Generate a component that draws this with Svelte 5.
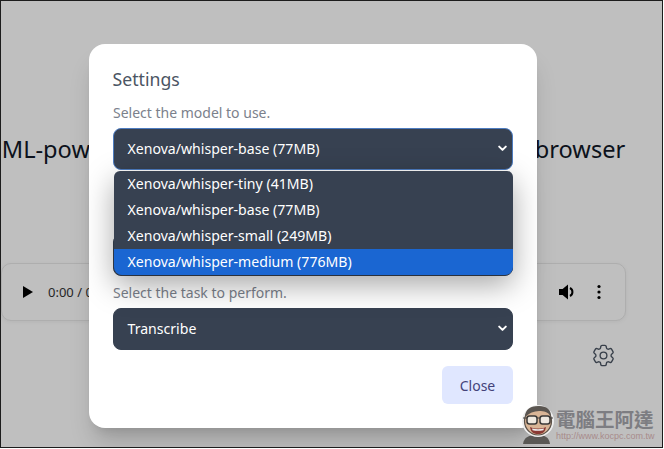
<script>
  const models = [
    { label: 'Xenova/whisper-tiny (41MB)' },
    { label: 'Xenova/whisper-base (77MB)' },
    { label: 'Xenova/whisper-small (249MB)' },
    { label: 'Xenova/whisper-medium (776MB)', active: true }
  ];
</script>

{#snippet chevron()}
  <svg class="chev" width="9" height="7" viewBox="0 0 9 7" aria-hidden="true">
    <path d="M1.2 1.6 4.500 4.900 7.800 1.600" fill="none" stroke="#fff" stroke-width="2" stroke-linecap="round" stroke-linejoin="round" />
  </svg>
{/snippet}

<div class="frame">
  <main class="page">
    <h1>ML-powered speech recognition directly in your browser</h1>
    <div class="player">
      <svg class="play" width="12" height="14" viewBox="0 0 12 14"><path d="M1 1v12l10-6z" fill="#000" /></svg>
      <span class="time">0:00 / 0:00</span>
      <span class="grow"></span>
      <svg class="vol" width="18" height="18" viewBox="0 0 18 18">
        <path d="M1 6v6h3.600L10 16.500V1.500L4.600 6z" fill="#000" />
        <path d="M12 5a4.500 4.500 0 0 1 0 8" fill="none" stroke="#000" stroke-width="2" />
      </svg>
      <svg class="dots" width="4" height="16" viewBox="0 0 4 16"><circle cx="2" cy="2.500" r="1.600" /><circle cx="2" cy="8" r="1.600" /><circle cx="2" cy="13.500" r="1.600" /></svg>
    </div>
    <div class="gear-row">
      <svg width="27" height="27" viewBox="0 0 24 24" fill="none" stroke="#4b5563" stroke-width="1.200" stroke-linecap="round" stroke-linejoin="round">
        <path d="M9.594 3.940c.09-.542.560-.940 1.110-.940h2.593c.550 0 1.020.398 1.110.940l.213 1.281c.063.374.313.686.645.870.074.040.147.083.220.127.324.196.720.257 1.075.124l1.217-.456a1.125 1.125 0 0 1 1.370.490l1.296 2.247a1.125 1.125 0 0 1-.260 1.431l-1.003.827c-.293.240-.438.613-.431.992a6.759 6.759 0 0 1 0 .255c-.007.378.138.750.430.990l1.005.828c.424.350.534.954.260 1.430l-1.298 2.247a1.125 1.125 0 0 1-1.369.491l-1.217-.456c-.355-.133-.750-.072-1.076.124a6.570 6.570 0 0 1-.220.128c-.331.183-.581.495-.644.869l-.213 1.280c-.090.543-.560.941-1.110.941h-2.594c-.550 0-1.020-.398-1.110-.940l-.213-1.281c-.062-.374-.312-.686-.644-.870a6.520 6.520 0 0 1-.220-.127c-.325-.196-.720-.257-1.076-.124l-1.217.456a1.125 1.125 0 0 1-1.369-.490l-1.297-2.247a1.125 1.125 0 0 1 .260-1.431l1.004-.827c.292-.240.437-.613.430-.992a6.932 6.932 0 0 1 0-.255c.007-.378-.138-.750-.430-.990l-1.004-.828a1.125 1.125 0 0 1-.260-1.430l1.297-2.247a1.125 1.125 0 0 1 1.370-.491l1.216.456c.356.133.751.072 1.076-.124.072-.044.146-.087.220-.128.332-.183.582-.495.644-.869l.214-1.281Z" />
        <path d="M15 12a3 3 0 1 1-6 0 3 3 0 0 1 6 0Z" />
      </svg>
    </div>
  </main>

  <div class="overlay">
    <section class="modal">
      <h2>Settings</h2>

      <p class="label first">Select the model to use.</p>
      <div class="select-wrap">
        <div class="select focused"><span>Xenova/whisper-base (77MB)</span>{@render chevron()}</div>
        <ul class="menu">
          {#each models as m}
            <li class:active={m.active}>{m.label}</li>
          {/each}
        </ul>
      </div>

      <div class="select covered"></div>

      <p class="label task">Select the task to perform.</p>
      <div class="select"><span>Transcribe</span>{@render chevron()}</div>

      <div class="actions"><button type="button">Close</button></div>
    </section>
  </div>

  <div class="mark">
    <svg width="36" height="40" viewBox="0 0 36 40">
      <path d="M3 40c1-7 6-9 14-9s12 2 13 9z" fill="#5a5855" />
      <ellipse cx="18" cy="17" rx="15" ry="15" fill="none" stroke="#eee" stroke-width="2" />
      <ellipse cx="18" cy="17" rx="13.500" ry="14" fill="#d9b596" stroke="#5b5148" stroke-width="1.200" />
      <path d="M5 13C5 5 11 2 19 2s12 4 12 10c-3-4-7-5-12-5S9 9 5 13z" fill="#5a5550" />
      <path d="M3 14h30" stroke="#444" stroke-width="1" />
      <rect x="7" y="12" width="10" height="8" rx="2.500" fill="#efe9e0" stroke="#3c3a38" stroke-width="1.500" />
      <rect x="20" y="12" width="10" height="8" rx="2.500" fill="#efe9e0" stroke="#3c3a38" stroke-width="1.500" />
      <path d="M10 23c5 2 11 2 16 0-1 6-4 7-8 7s-7-1-8-7z" fill="#8a3a34" />
      <path d="M12 24.500c4 1 8 1 12 0l-.6 1.800c-3.500.7-7.500.7-10.800 0z" fill="#eee" />
    </svg>
    <div class="mark-text">
      <span class="cjk">電腦王阿達</span>
      <span class="url">http://www.kocpc.com.tw</span>
    </div>
  </div>
</div>

<style>
  :global(body) {
    margin: 0;
    background: #fff;
  }
  .frame {
    position: relative;
    box-sizing: border-box;
    width: 663px;
    height: 448px;
    border: 1px solid #1c1c1c;
    overflow: hidden;
    background: #fff;
    font-family: "Noto Sans", "Open Sans", sans-serif;
    color: #111827;
  }
  .page {
    width: 625px;
    padding-top: 130px;
  }
  h1 {
    margin: 0;
    font-size: 23.600px;
    line-height: 36px;
    font-weight: 400;
    text-align: center;
    white-space: nowrap;
  }
  .player {
    box-sizing: border-box;
    display: flex;
    align-items: center;
    height: 58px;
    margin-top: 96px;
    padding: 0 24px 0 20px;
    border: 1px solid #e8e8e8;
    border-radius: 10px;
    background: #fff;
    box-shadow: 0 1px 4px rgba(0, 0, 0, .06);
  }
  .time {
    margin-left: 14px;
    font-size: 13px;
    color: #333;
  }
  .grow { flex: 1; }
  .vol { margin-right: 21px; }
  .gear-row {
    display: flex;
    justify-content: flex-end;
    padding: 21px 9px 0 0;
  }
  .overlay {
    position: absolute;
    inset: 0;
    background: rgba(0, 0, 0, .25);
  }
  .modal {
    position: absolute;
    left: 88px;
    top: 43px;
    box-sizing: border-box;
    width: 448px;
    height: 384px;
    padding: 24px;
    border-radius: 16px;
    background: #fff;
    box-shadow: 0 18px 24px -5px rgba(0, 0, 0, .18), 0 8px 10px -6px rgba(0, 0, 0, .1);
  }
  h2 {
    margin: 0 0 0 -.5px;
    font-size: 17.700px;
    line-height: 22px;
    font-weight: 400;
    color: #4b5563;
  }
  .label {
    margin: 0 0 5px;
    font-size: 14px;
    line-height: 20px;
    color: #7b818c;
  }
  .first { margin-top: 13px; }
  .covered { margin-top: 64px; }
  .task { margin-top: 7px; }
  .select-wrap { position: relative; }
  .select {
    box-sizing: border-box;
    display: flex;
    align-items: center;
    justify-content: space-between;
    width: 400px;
    height: 42px;
    padding: 0 5px 2px 13.500px;
    border: 1px solid #374151;
    border-radius: 8px;
    background: #374151;
    color: #fff;
    font-size: 14.100px;
  }
  .focused {
    border-color: #4d7cc0;
  }
  .chev { flex: none; }
  .menu {
    position: absolute;
    z-index: 2;
    left: 1px;
    top: 43px;
    width: 399px;
    margin: 0;
    padding: 0;
    list-style: none;
    overflow: hidden;
    border-radius: 6px 6px 8px 8px;
    background: #374151;
    color: #fff;
    font-size: 14.100px;
    box-shadow: 0 10px 30px rgba(0, 0, 0, .35);
  }
  .menu li {
    height: 26px;
    line-height: 25px;
    padding-left: 13.500px;
  }
  .menu li.active { background: #1a66d2; }
  .actions {
    display: flex;
    justify-content: flex-end;
    margin-top: 16px;
  }
  button {
    width: 71px;
    height: 38px;
    padding: 0;
    border: 0;
    border-radius: 6px;
    background: #e0e7ff;
    color: #43427a;
    font: 400 14px "Noto Sans", sans-serif;
  }
  .mark {
    position: absolute;
    right: 8px;
    bottom: 3px;
    display: flex;
    align-items: center;
    gap: 0;
  }
  .mark-text {
    display: flex;
    flex-direction: column;
    align-items: flex-start;
    width: 98px;
  }
  .cjk {
    font-family: "Noto Sans CJK TC", sans-serif;
    font-weight: 700;
    font-size: 19.500px;
    line-height: 24px;
    color: #7d7d82;
  }
  .url {
    font-family: "Liberation Sans", sans-serif;
    font-size: 9px;
    line-height: 10px;
    color: #a88b8b;
    white-space: nowrap;
  }
</style>
